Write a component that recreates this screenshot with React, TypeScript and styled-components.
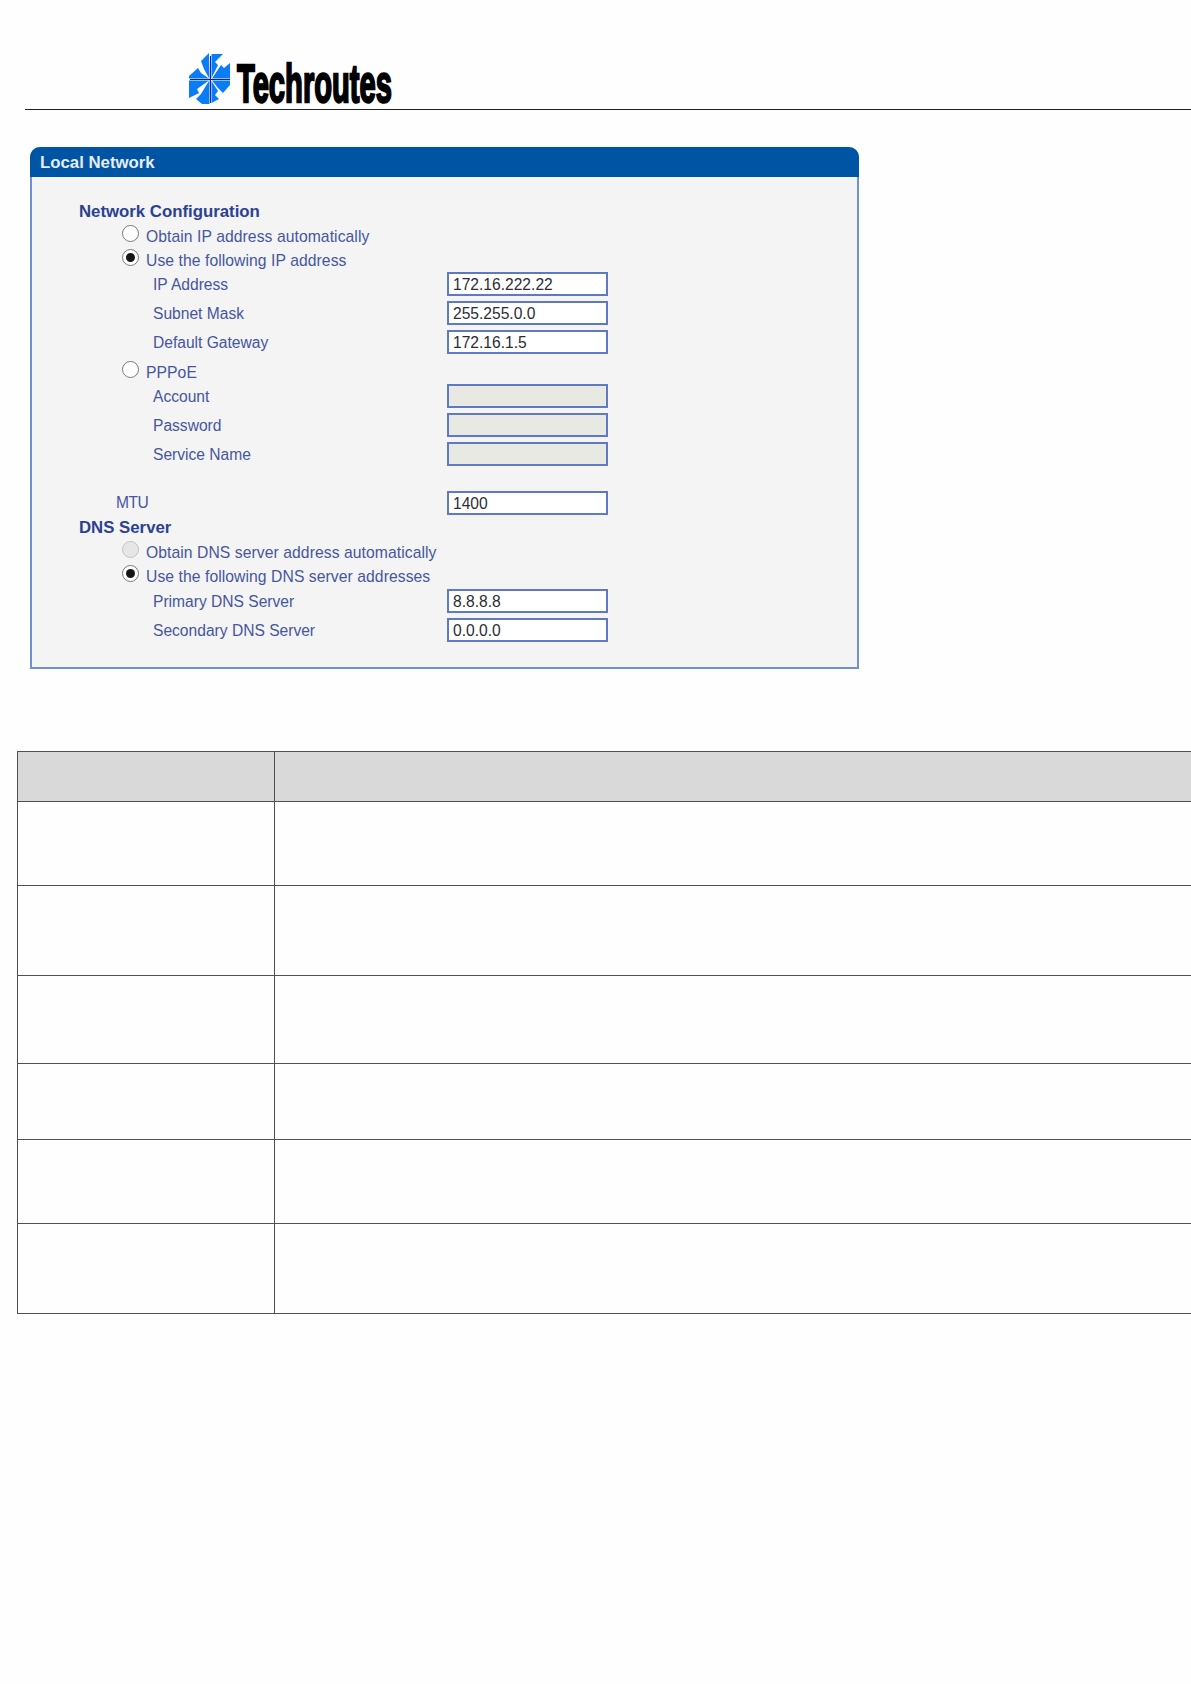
import styled, { createGlobalStyle } from 'styled-components';

const GlobalStyle = createGlobalStyle`
  html, body {
    margin: 0;
    padding: 0;
    background: #fefefe;
    overflow-x: hidden;
  }
  body {
    font-family: 'Liberation Sans', Arial, sans-serif;
  }
`;

function App() {
  return (
    <Page>
      <GlobalStyle />
      <Header>
        <LogoMark />
        <LogoText>Techroutes</LogoText>
      </Header>

      <Panel>
        <PanelTitle>Local Network</PanelTitle>
        <PanelBody>
          <Heading>Network Configuration</Heading>
          <RadioRow label="Obtain IP address automatically" />
          <RadioRow label="Use the following IP address" checked />
          <Fields>
            <Field label="IP Address" value="172.16.222.22" />
            <Field label="Subnet Mask" value="255.255.0.0" />
            <Field label="Default Gateway" value="172.16.1.5" />
          </Fields>
          <PppoeRow>
            <RadioRow label="PPPoE" />
          </PppoeRow>
          <Fields>
            <Field label="Account" disabled />
            <Field label="Password" disabled />
            <Field label="Service Name" disabled />
          </Fields>
          <MtuRow>
            <MtuLabel>MTU</MtuLabel>
            <TextInput readOnly value="1400" />
          </MtuRow>
          <Heading>DNS Server</Heading>
          <RadioRow label="Obtain DNS server address automatically" muted />
          <RadioRow label="Use the following DNS server addresses" checked />
          <DnsFields>
            <Field label="Primary DNS Server" value="8.8.8.8" />
            <Field label="Secondary DNS Server" value="0.0.0.0" />
          </DnsFields>
        </PanelBody>
      </Panel>

      <TableClip>
        <InfoTable>
          <colgroup>
            <col style={{ width: 257 }} />
            <col />
          </colgroup>
          <thead>
            <tr>
              <HeadCell />
              <HeadCell />
            </tr>
          </thead>
          <tbody>
            {rowHeights.map((height) => (
              <InfoRow key={height.id} $height={height.value}>
                <td />
                <td />
              </InfoRow>
            ))}
          </tbody>
        </InfoTable>
      </TableClip>
    </Page>
  );
}

const rowHeights = [
  { id: 'a', value: 84 },
  { id: 'b', value: 90 },
  { id: 'c', value: 88 },
  { id: 'd', value: 76 },
  { id: 'e', value: 84 },
  { id: 'f', value: 90 },
];

function LogoMark() {
  return (
    <LogoSvg viewBox="0 0 43 52" aria-hidden="true">
      <path fill="#0a7cf5" d="M13 8 L21 0 L21.5 26 L16 16 Z" />
      <path fill="#0a7cf5" d="M23.5 1 L35 1 L27 9 L30 12 L23.5 25 Z" />
      <path fill="#0a7cf5" d="M24 25.5 L42 25.5 L42 10 L36 15 L33 12 Z" />
      <path fill="#0a7cf5" d="M1 25.5 L21 25.5 L13 20 L10 15 L1 23 Z" />
      <path fill="#0a7cf5" d="M1 27.5 L21 27.5 L9 36 L11 40 L1 45 Z" />
      <path fill="#0a7cf5" d="M21.5 27 L21.5 51 L14 51 L8 46 L13 41 Z" />
      <path fill="#0a7cf5" d="M23.5 28 L23.5 50 L31 46 L27 42 L30 38 Z" />
      <path fill="#0a7cf5" d="M24 27.5 L42 27.5 L42 32 L35 40 L30 35 Z" />
      <path stroke="#0b1f9e" strokeWidth="1" fill="none" d="M22.5 3 V50 M2 26.5 H42" />
    </LogoSvg>
  );
}

function RadioRow({ label, checked, muted }: { label: string; checked?: boolean; muted?: boolean }) {
  return (
    <RadioLine>
      <RadioDot $muted={muted}>{checked && <RadioFill />}</RadioDot>
      <RadioLabel>{label}</RadioLabel>
    </RadioLine>
  );
}

function Field({ label, value, disabled }: { label: string; value?: string; disabled?: boolean }) {
  return (
    <FieldRow>
      <FieldLabel>{label}</FieldLabel>
      <TextInput readOnly value={value ?? ''} disabled={disabled} />
    </FieldRow>
  );
}

const Page = styled.div`
  width: 1191px;
  height: 1684px;
  overflow: hidden;
`;

const Header = styled.header`
  display: flex;
  align-items: flex-end;
  box-sizing: border-box;
  height: 110px;
  margin-left: 25px;
  padding: 0 0 3px 163px;
  border-bottom: 1px solid #222;
`;

const LogoSvg = styled.svg`
  display: block;
  flex: none;
  width: 43px;
  height: 52px;
  margin-bottom: 1px;
`;

const LogoText = styled.div`
  display: inline-block;
  width: 155px;
  margin: 0 0 4px 6px;
  color: #000;
  font-family: 'Liberation Sans', Arial, sans-serif;
  font-size: 54px;
  font-weight: 700;
  line-height: 38px;
  transform: scaleX(0.54);
  transform-origin: left center;
  -webkit-text-stroke: 2.4px #000;
  white-space: nowrap;
`;

const Panel = styled.section`
  box-sizing: border-box;
  width: 829px;
  height: 522px;
  margin: 37px 0 0 30px;
  border: 2px solid #7091cf;
  border-top: 0;
  border-radius: 10px 10px 0 0;
  background: #f4f4f4;
`;

const PanelTitle = styled.div`
  box-sizing: border-box;
  height: 30px;
  margin: 0 -2px;
  padding-left: 10px;
  border-radius: 10px 10px 0 0;
  background: #0054a4;
  color: #e6ecf5;
  font-size: 16.8px;
  font-weight: 700;
  line-height: 32px;
`;

const PanelBody = styled.div`
  padding: 22px 0 0 47px;
`;

const Heading = styled.div`
  height: 25px;
  color: #2b4193;
  font-size: 16.8px;
  font-weight: 700;
  line-height: 25px;
`;

const RadioLine = styled.div`
  display: flex;
  align-items: center;
  height: 24px;
  padding-left: 43px;
`;

const RadioDot = styled.span<{ $muted?: boolean }>`
  display: flex;
  align-items: center;
  justify-content: center;
  box-sizing: border-box;
  width: 17px;
  height: 17px;
  margin-top: -5px;
  border: 1.5px solid ${(p) => (p.$muted ? '#c4c4c4' : '#7a7a7a')};
  border-radius: 50%;
  background: ${(p) => (p.$muted ? '#e6e6e6' : '#fff')};
`;

const RadioFill = styled.span`
  width: 9px;
  height: 9px;
  border-radius: 50%;
  background: #151515;
`;

const RadioLabel = styled.span`
  margin-left: 7px;
  padding-top: 2px;
  color: #46569f;
  font-size: 15.7px;
  letter-spacing: 0.07px;
  white-space: nowrap;
`;

const Fields = styled.div`
  display: flex;
  flex-direction: column;
  gap: 5px;
`;

const DnsFields = styled(Fields)`
  margin-top: 1px;
`;

const FieldRow = styled.div`
  display: flex;
  align-items: center;
  height: 24px;
  padding-left: 74px;
`;

const FieldLabel = styled.span`
  width: 294px;
  padding-top: 2px;
  color: #46569f;
  font-size: 15.6px;
  white-space: nowrap;
`;

const TextInput = styled.input`
  box-sizing: border-box;
  width: 161px;
  height: 24px;
  margin: 0;
  padding: 2px 4px 0;
  border: 2px solid #5f79c4;
  border-radius: 0;
  outline: none;
  background: #fff;
  color: #2c2c34;
  font-family: 'Liberation Sans', Arial, sans-serif;
  font-size: 15.6px;

  &:disabled {
    background: #e8e9e3;
  }
`;

const PppoeRow = styled.div`
  margin-top: 6px;
`;

const MtuRow = styled.div`
  display: flex;
  align-items: center;
  height: 24px;
  margin-top: 25px;
  padding-left: 37px;
`;

const MtuLabel = styled.span`
  width: 331px;
  color: #46569f;
  font-size: 15.6px;
  letter-spacing: -0.5px;
`;

const TableClip = styled.div`
  margin: 82px 0 0 17px;
  overflow: hidden;
`;

const InfoTable = styled.table`
  width: 1240px;
  border-collapse: collapse;
  table-layout: fixed;

  td,
  th {
    padding: 0;
    border: 1px solid #4f4f4f;
  }
`;

const HeadCell = styled.th`
  height: 49px;
  background: #d9d9d9;
`;

const InfoRow = styled.tr<{ $height: number }>`
  height: ${(p) => p.$height}px;
`;

export default App;
